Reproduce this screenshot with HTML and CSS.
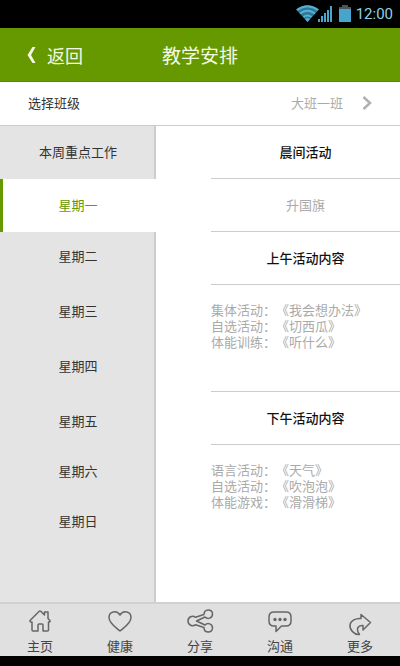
FILE: index.html
```
<!DOCTYPE html>
<html lang="zh-CN">
<head>
  <meta charset="UTF-8">
  <title>教学安排</title>
  <meta name="viewport" content="width=device-width, initial-scale=1">
  <link rel="stylesheet" href="styles.css">
</head>
<body>
  <div class="status">
    <svg class="signal" width="38" height="18" viewBox="0 0 38 18" aria-hidden="true">
      <path d="M0 4.5Q11.500-3.500 23 4.500L11.500 17Z" fill="#2f7896"/>
      <path d="M1 5Q11.500-2.500 22 5M4 8.500Q11.500 3 19 8.500M7.500 12Q11.500 9 15.500 12" fill="none" stroke="#55b2d6" stroke-width="2"/>
      <path d="M9 14l2.500 3 2.500-3q-2.500-1.500-5 0z" fill="#55b2d6"/>
      <path d="M22 14h2v3h-2zM25 11h2v6h-2zM28 8h2v9h-2zM31 5h2v12h-2zM34 1h2v16h-2z" fill="#4ba6c9"/>
    </svg>
    <svg width="12" height="18" viewBox="0 0 12 18" aria-hidden="true">
      <path d="M3 0h6v2h3v3H0V2h3z" fill="#4a5559"/>
      <path d="M0 4h12v13H0z" fill="#45a5cc"/>
    </svg>
    <span class="time">12:00</span>
  </div>

  <header class="topbar">
    <a class="back" href="#">
      <svg width="9" height="16" viewBox="0 0 9 16" aria-hidden="true">
        <path d="M5.500 0H8.500L4 8l4.500 8h-3L0.500 8z" fill="#f4f9e4"/>
      </svg>
      返回
    </a>
    <h1>教学安排</h1>
  </header>

  <div class="class-row">
    <label for="classSelect">选择班级</label>
    <div class="picker">
      <select id="classSelect">
        <option>大班一班</option>
      </select>
      <svg width="10" height="14" viewBox="0 0 10 14" aria-hidden="true">
        <path d="M1.500 1L8 7l-6.500 6" fill="none" stroke="#b0b0b0" stroke-width="2.500"/>
      </svg>
    </div>
  </div>

  <div class="content">
    <div class="days">
      <button class="day head">本周重点工作</button>
      <button class="day head active">星期一</button>
      <button class="day">星期二</button>
      <button class="day">星期三</button>
      <button class="day">星期四</button>
      <button class="day">星期五</button>
      <button class="day weekend">星期六</button>
      <button class="day weekend">星期日</button>
    </div>

    <main class="plan">
      <h2>晨间活动</h2>
      <p class="single">升国旗</p>
      <h2>上午活动内容</h2>
      <div class="block">
        <p>集体活动：《我会想办法》</p>
        <p>自选活动：《切西瓜》</p>
        <p>体能训练：《听什么》</p>
      </div>
      <h2>下午活动内容</h2>
      <div class="block">
        <p>语言活动：《天气》</p>
        <p>自选活动：《吹泡泡》</p>
        <p>体能游戏：《滑滑梯》</p>
      </div>
    </main>
  </div>

  <nav class="tabs">
    <a href="#">
      <svg viewBox="0 0 24 24" aria-hidden="true">
        <path d="M2 11.500L11 2.500q1-1 2 0L16.500 6V3H20v6.500l2 2q.5 1.500-1.500 1.500V21q0 1-1 1H15v-6q0-1-1-1h-3q-1 0-1 1v6H5q-1 0-1-1v-8q-2.500 0-2-1.500z"/>
      </svg>
      主页
    </a>
    <a href="#">
      <svg viewBox="0 0 24 24" aria-hidden="true">
        <path d="M12 22C8 18.500 1 14.500 1 8.500 1 2 9 1 12 6c3-5 11-4 11 2.500 0 6-7 10-11 13.500z"/>
      </svg>
      健康
    </a>
    <a href="#">
      <svg class="wide" viewBox="0 0 27 24" aria-hidden="true">
        <path d="M8.500 8.300L17 5.500C17-.5 25.500-.5 25.500 5c0 4.500-5 5.500-7.500 3l-8.500 4 8.500 4c2.500-2.500 7.500-1.500 7.500 3 0 5.500-8.500 5.500-8.500-.5l-8.500-2.800C5.500 18 1 16 1 12s4.500-6 7.500-3.700z"/>
      </svg>
      分享
    </a>
    <a href="#">
      <svg viewBox="0 0 24 24" aria-hidden="true">
        <path d="M6 3h12q5 0 5 5v4q0 5-5 5h-4.500L8 22.500V17H6q-5 0-5-5V8q0-5 5-5z"/>
        <g class="dots"><circle cx="7" cy="10.500" r="1.700"/><circle cx="12" cy="10.500" r="1.700"/><circle cx="17" cy="10.500" r="1.700"/></g>
      </svg>
      沟通
    </a>
    <a href="#">
      <svg viewBox="0 0 24 24" aria-hidden="true">
        <path d="M13 5.500L22.500 13.500 15 21v-4.500c-5-.5-7.500 3-3.500 9C6 26 1.500 20.500 2 16 2.500 11.500 8 9 13 9.500z"/>
      </svg>
      更多
    </a>
  </nav>
</body>
</html>
```
FILE: styles.css
```
* {
  box-sizing: border-box;
}
body {
  margin: 0;
  min-height: 100vh;
  display: flex;
  flex-direction: column;
  font-family: "Noto Sans CJK SC", sans-serif;
  font-size: 13px;
  line-height: 20px;
  color: #333;
  background: #fff;
  border-bottom: 10px solid #000;
}
h1, h2, p {
  margin: 0;
}
a {
  color: inherit;
  text-decoration: none;
}
button, select {
  font: inherit;
  color: inherit;
  background: none;
  border: none;
  padding: 0;
  cursor: pointer;
}

/* status bar */
.status {
  height: 28px;
  padding: 0 7px;
  display: flex;
  align-items: center;
  justify-content: flex-end;
  gap: 5px;
  background: #000;
}
.time {
  font-family: Roboto, sans-serif;
  font-size: 15px;
  color: #8fd0e6;
}

/* title bar */
.topbar {
  height: 54px;
  padding: 0 27px;
  display: grid;
  grid-template-columns: 1fr auto 1fr;
  align-items: center;
  color: #f4f9e4;
  background: #669900;
  border-bottom: 1px solid #5c8420;
}
.back {
  display: flex;
  align-items: center;
  gap: 11px;
  font-size: 18px;
}
.topbar h1 {
  font-size: 19px;
  font-weight: 400;
}

/* class picker */
.class-row {
  height: 44px;
  padding: 0 28px 2px;
  display: flex;
  align-items: center;
  justify-content: space-between;
  border-bottom: 1px solid #ccc;
}
.picker {
  display: flex;
  align-items: center;
  gap: 18px;
  color: #aaa;
}
.picker select {
  appearance: none;
}

.content {
  flex: 1;
  display: flex;
}

/* weekday list */
.days {
  width: 39%;
  display: flex;
  flex-direction: column;
  background: linear-gradient(to left, #ccc 2px, #e4e4e4 2px);
}
.day {
  padding: 14px 0 21px;
}
.day.head {
  padding: 16px 0 17px;
}
.day.weekend {
  padding-top: 9px;
}
.day.active {
  color: #669900;
  background: linear-gradient(to right, #669900 3px, #fff 3px);
}

/* activities */
.plan {
  flex: 1;
  padding-left: 55px;
}
.plan h2, .single {
  padding: 16px 0;
  text-align: center;
  border-bottom: 1px solid #ccc;
}
.plan h2 {
  font-size: 13px;
  font-weight: 500;
  color: #111;
}
.single, .block {
  color: #aaa;
}
.block {
  min-height: 107px;
  padding: 17px 0;
  line-height: 16px;
  text-spacing-trim: space-all; /* keep ： and 《 full width */
  border-bottom: 1px solid #ccc;
}
.block:last-child {
  border-bottom: none;
}

/* bottom tabs */
.tabs {
  height: 54px;
  display: flex;
  color: #444;
  background: #e0e0e0;
  border-top: 2px solid #d0d0d0;
}
.tabs a {
  flex: 1;
  padding-top: 5px;
  display: flex;
  flex-direction: column;
  align-items: center;
  gap: 3px;
}
.tabs svg {
  width: 24px;
  height: 24px;
  overflow: visible;
  fill: none;
  stroke: #666;
  stroke-width: 1.5;
  stroke-linejoin: round;
}
.tabs .wide {
  width: 27px;
}
.tabs .dots {
  fill: #666;
  stroke: none;
}
```
